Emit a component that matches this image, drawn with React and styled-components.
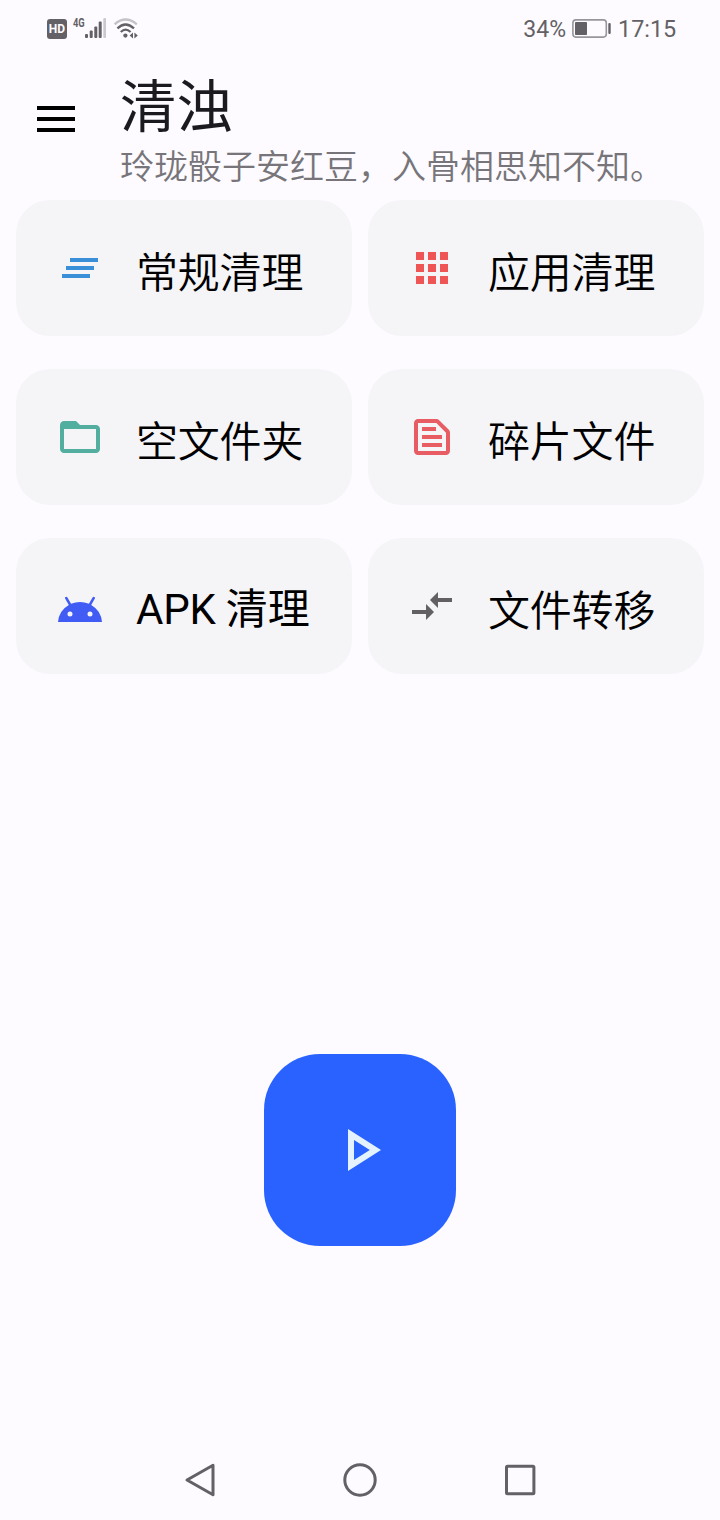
import styled, { createGlobalStyle } from 'styled-components'
import {
    MdClearAll,
    MdApps,
    MdFolderOpen,
    MdOutlineTextSnippet,
    MdCompareArrows,
    MdOutlinePlayArrow
} from 'react-icons/md'

function AndroidHead() {
    return (
        <svg width="48" height="48" viewBox="0 -2 24 24" fill="currentColor">
            <path d="M17.6 9.48l1.84-3.18c.16-.31.04-.69-.26-.85a.637.637 0 0 0-.83.22l-1.88 3.24a11.463 11.463 0 0 0-8.94 0L5.65 5.67a.643.643 0 0 0-.87-.2c-.28.18-.37.54-.22.83L6.4 9.48A10.78 10.78 0 0 0 1 18h22a10.78 10.78 0 0 0-5.4-8.52zM7 15.25a1.25 1.25 0 1 1 0-2.5 1.25 1.25 0 0 1 0 2.5zm10 0a1.25 1.25 0 1 1 0-2.5 1.25 1.25 0 0 1 0 2.5z" />
        </svg>
    );
}

function Signal() {
    return (
        <svg width="22" height="22" viewBox="0 0 22 22" fill="#636165">
            <rect x="0" y="16" width="3" height="4" rx="1" />
            <rect x="4.7" y="12.5" width="3" height="7.5" rx="1" />
            <rect x="9.3" y="8.5" width="3" height="11.5" rx="1" />
            <rect x="13.7" y="3.5" width="3" height="16.5" rx="1" />
            <rect x="18.3" y="0" width="2.7" height="20" rx="1" fill="#cbc9cd" />
        </svg>
    );
}

function Wifi() {
    return (
        <svg width="26" height="22" viewBox="0 0 26 22" fill="none" strokeWidth="2.2">
            <path d="M0.6 6.3Q11.5 -3.3 22.8 6.3" stroke="#c4c2c6" />
            <path d="M3.4 10.4Q11.5 2.6 20 10.4" stroke="#636165" />
            <path d="M6.8 14Q11.5 9.4 16.6 14" stroke="#636165" />
            <circle cx="11.4" cy="17.6" r="2.1" fill="#636165" />
            <path d="M19 14.5v6l-3.4-3zM20.4 14.5v6l3.4-3z" fill="#636165" />
        </svg>
    );
}

function Battery() {
    return (
        <svg width="40" height="20" viewBox="0 0 40 20">
            <rect x="0.9" y="0.9" width="33.4" height="17.2" rx="3" fill="none" stroke="#98969a" strokeWidth="1.6" />
            <rect x="3" y="3" width="12" height="13" rx="0.8" fill="#636165" />
            <rect x="36.3" y="4" width="2.4" height="11" rx="1" fill="#636165" />
        </svg>
    );
}

const options = [
    { name: '常规清理', color: '#3a90d8', icon: <MdClearAll /> },
    { name: '应用清理', color: '#ef5555', icon: <MdApps /> },
    { name: '空文件夹', color: '#52ae9f', icon: <MdFolderOpen /> },
    { name: '碎片文件', color: '#e85c63', icon: <MdOutlineTextSnippet /> },
    { name: 'APK 清理', color: '#405cf5', icon: <AndroidHead /> },
    { name: '文件转移', color: '#626063', icon: <MdCompareArrows /> }
]

export default function App() {
    return (
        <>
            <GlobalStyle />
            <Screen>
                <Statusbar>
                    <Hd>HD</Hd>
                    <Network>4G</Network>
                    <Signal />
                    <Wifi />
                    <Percent>34%</Percent>
                    <Battery />
                    <Clock>17:15</Clock>
                </Statusbar>

                <Header>
                    <Menu aria-label="菜单">
                        <span />
                        <span />
                        <span />
                    </Menu>
                    <Titles>
                        <h1>清浊</h1>
                        <p>玲珑骰子安红豆，入骨相思知不知。</p>
                    </Titles>
                </Header>

                <Options>
                    {options.map(({ name, color, icon }) => (
                        <Option key={name} $color={color} $mixed={name.startsWith('APK')}>
                            {icon}
                            <p>{name}</p>
                        </Option>
                    ))}
                </Options>

                <Start aria-label="开始">
                    <MdOutlinePlayArrow />
                </Start>

                <Navbar>
                    <svg width="34" height="36" viewBox="0 0 34 36">
                        <path d="M30 3.2v29.6L4 18z" />
                    </svg>
                    <svg width="36" height="36" viewBox="0 0 36 36">
                        <circle cx="18" cy="18" r="15.2" />
                    </svg>
                    <svg width="34" height="36" viewBox="0 0 34 36">
                        <rect x="2.5" y="4.3" width="27.4" height="27.4" rx="1" />
                    </svg>
                </Navbar>
            </Screen>
        </>
    );
}

const GlobalStyle = createGlobalStyle`
    * {
        box-sizing: border-box;
        margin: 0;
        padding: 0;
    }
    body {
        background-color: #fdfbff;
        font-family: Roboto, 'Noto Sans CJK SC', sans-serif;
    }
    button {
        border: none;
        background: none;
    }
    svg {
        display: block;
        flex-shrink: 0;
    }
`

const Screen = styled.div`
    width: 720px;
    height: 1520px;
    display: flex;
    flex-direction: column;
    align-items: center;
    overflow: hidden;
`

const Statusbar = styled.div`
    width: 100%;
    height: 58px;
    display: flex;
    align-items: center;
    padding: 0 43px 0 47px;
    color: #636165;
`

const Hd = styled.div`
    width: 20px;
    height: 20px;
    border-radius: 3px;
    background-color: #636165;
    color: #fdfbff;
    font-size: 12px;
    font-weight: 700;
    line-height: 20px;
    text-align: center;
`

const Network = styled.div`
    width: 12px;
    margin: 0 0 12px 6px;
    font-size: 13px;
    font-weight: 700;
    line-height: 12px;
    transform: scaleX(0.72);
    transform-origin: left;

    & + svg {
        margin-right: 7px;
    }
`

const Percent = styled.div`
    margin-left: auto;
    margin-right: 6px;
    font-size: 23px;
`

const Clock = styled.div`
    width: 59px;
    margin-left: 6px;
    font-size: 23.4px;
`

const Header = styled.div`
    width: 100%;
    height: 142px;
    display: flex;
`

const Menu = styled.button`
    width: 38px;
    height: 26px;
    display: flex;
    flex-direction: column;
    justify-content: space-between;
    margin: 48px 45px 0 37px;

    span {
        height: 4px;
        background-color: #000;
    }
`

const Titles = styled.div`
    h1 {
        height: 83px;
        padding-top: 10px;
        font-size: 56.5px;
        font-weight: 400;
        line-height: 80px;
        color: #1b1b1f;
    }
    p {
        font-family: 'Noto Sans CJK SC', sans-serif;
        font-size: 34px;
        font-weight: 350;
        line-height: 48px;
        color: #77757a;
        white-space: nowrap;
    }
`

const Options = styled.div`
    display: grid;
    grid-template-columns: 336px 336px;
    grid-auto-rows: 136px;
    gap: 33px 16px;
`

const Option = styled.div`
    display: flex;
    align-items: center;
    padding-left: 40px;
    border-radius: 34px;
    background-color: #f5f4f7;

    svg {
        width: 48px;
        height: 48px;
        color: ${({ $color }) => $color};
    }
    p {
        margin-left: 32px;
        padding-top: ${({ $mixed }) => $mixed ? '8px' : '3px'};
        font-family: ${({ $mixed }) => $mixed ? 'Roboto,' : ''} 'Noto Sans CJK SC', sans-serif;
        font-size: 42px;
        font-weight: ${({ $mixed }) => $mixed ? 400 : 350};
        line-height: 60px;
        letter-spacing: -0.2px;
        white-space: nowrap;
        color: #000;
    }
`

const Start = styled.button`
    width: 192px;
    height: 192px;
    display: flex;
    align-items: center;
    justify-content: center;
    margin-top: 380px;
    border-radius: 56px;
    background-color: #2962ff;

    svg {
        width: 72px;
        height: 72px;
        color: #e3f2fd;
    }
`

const Navbar = styled.div`
    width: 355px;
    display: flex;
    justify-content: space-between;
    margin-top: auto;
    margin-bottom: 22px;

    svg {
        fill: none;
        stroke: #636165;
        stroke-width: 3;
        stroke-linejoin: round;
    }
`
